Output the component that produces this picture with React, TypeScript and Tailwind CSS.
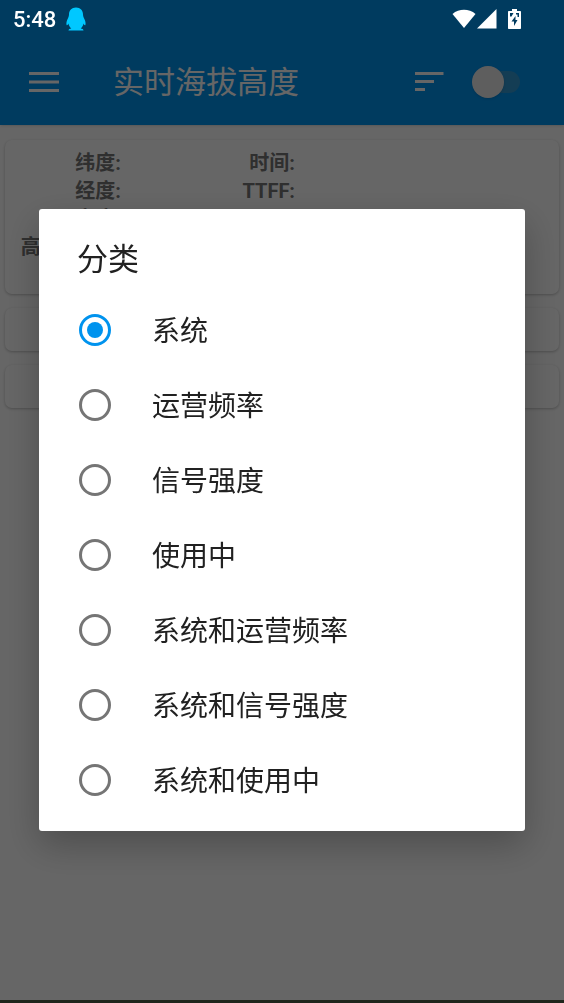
import { useState } from "react";

const options = [
    "系统",
    "运营频率",
    "信号强度",
    "使用中",
    "系统和运营频率",
    "系统和信号强度",
    "系统和使用中",
];

function StatusBar() {
    return (
        <div className="fixed inset-x-0 top-0 z-20 flex h-[38px] items-center justify-between pl-[13px] pr-[43px] text-white">
            <div className="flex items-center gap-[10px]">
                <span className="pt-px text-[22px] font-medium leading-none">5:48</span>
                <svg width="20" height="24" viewBox="0 0 20 24" fill="#00c8ff" aria-hidden="true">
                    <path d="M10 0.500C5.600 0.500 3 3.600 3 7.500C3 9 2.500 10.400 1.400 12.500C0.500 14.500 0 17 0.800 18.300C1.500 18.500 2 17.400 2.400 16.600C2.800 18.600 3.900 20.300 5.300 21.500C3.700 21.600 2.500 22.200 2.500 23.500H17.500C17.500 22.200 16.300 21.600 14.700 21.500C16.100 20.300 17.200 18.600 17.600 16.600C18 17.400 18.500 18.500 19.200 18.300C20 17 19.500 14.500 18.600 12.500C17.500 10.400 17 9 17 7.500C17 3.600 14.400 0.500 10 0.500Z" />
                </svg>
            </div>
            <div className="flex items-center">
                <svg width="24" height="20" viewBox="0 0 24 20" fill="currentColor" aria-hidden="true">
                    <path d="M0.500 5C7 -0.600 17 -0.600 23.500 5L12 19Z" />
                </svg>
                <svg className="ml-px" width="20" height="20" viewBox="0 0 20 20" fill="currentColor" aria-hidden="true">
                    <path d="M19.500 0V19.500H0Z" />
                </svg>
                <svg className="ml-[11px]" width="13" height="20" viewBox="0 0 13 20" fill="currentColor" aria-hidden="true">
                    <path
                        fillRule="evenodd"
                        d="M4 0H9V2H12C12.600 2 13 2.400 13 3V19C13 19.600 12.600 20 12 20H1C0.400 20 0 19.600 0 19V3C0 2.400 0.400 2 1 2H4ZM2 4V7.500H3.500L5.500 4ZM7.500 7L3.500 12.500H6V17L9.500 11H7.500ZM8 4V5.500H9.500V8H11V4Z"
                    />
                </svg>
            </div>
        </div>
    );
}

function Toolbar() {
    return (
        <header className="flex h-[125px] items-center bg-[#0093ee] pl-[29px] pr-[44px] pt-[38px] text-white shadow">
            <button type="button" aria-label="菜单">
                <svg width="30" height="20" viewBox="0 0 30 20" fill="currentColor">
                    <path d="M0 0H30V3H0ZM0 8.500H30V11.500H0ZM0 17H30V20H0Z" />
                </svg>
            </button>
            <h1 className="ml-[54px] pt-px text-[31px] leading-none">实时海拔高度</h1>
            <button type="button" aria-label="排序" className="ml-auto">
                <svg width="29" height="19" viewBox="0 0 29 19" fill="currentColor">
                    <path d="M0 0H28.500V3H0ZM0 8H19V11H0ZM0 16H10V19H0Z" />
                </svg>
            </button>
            <label className="relative ml-[28px] flex h-8 w-12 items-center">
                <input type="checkbox" aria-label="定位" className="peer absolute inset-0 z-10 appearance-none" />
                <span className="ml-auto h-[22px] w-[36px] rounded-full bg-[#4a9ac4]/70" />
                <span className="absolute left-0 size-8 rounded-full bg-[#ececec] shadow-sm peer-checked:left-4" />
            </label>
        </header>
    );
}

function Card({ children }: { children?: React.ReactNode }) {
    return (
        <section className="min-h-[43px] rounded-[7px] bg-white shadow-[0_1px_3px_rgba(0,0,0,0.25)]">
            {children}
        </section>
    );
}

function SortDialog() {
    const [selected, setSelected] = useState("系统");

    return (
        <div className="fixed inset-0 z-10 flex items-center justify-center bg-black/60 px-[39px] pt-[37px]">
            <div
                role="dialog"
                aria-labelledby="sort-title"
                className="w-full rounded-[3px] bg-white pb-[14px] text-[#212121] shadow-[0_14px_36px_rgba(0,0,0,0.25)]"
            >
                <h2 id="sort-title" className="px-[38px] pb-[9px] pt-7 text-[31px] leading-[46px]">分类</h2>
                {options.map((option) => (
                    <label key={option} className="flex h-[75px] items-center gap-[41px] px-10 text-[28px]">
                        <input
                            type="radio"
                            name="sort"
                            checked={selected === option}
                            onChange={() => setSelected(option)}
                            className="size-8 shrink-0 appearance-none rounded-full border-3 border-[#757575] bg-clip-content p-[5px] checked:border-[#0093ee] checked:bg-[#0093ee]"
                        />
                        <span className="pt-1">{option}</span>
                    </label>
                ))}
            </div>
        </div>
    );
}

export default function App() {
    return (
        <div className="flex min-h-screen flex-col bg-white font-[Roboto,'Noto_Sans_CJK_SC',sans-serif]">
            <StatusBar />
            <Toolbar />
            <main className="flex flex-1 flex-col gap-[14px] px-[5px] py-[15px]">
                <Card>
                    <div className="flex pb-[5px] pt-[9px] text-right text-[20px] font-bold leading-7 text-[#757575]">
                        <div className="w-[116px]">
                            <p>纬度:</p>
                            <p>经度:</p>
                            <p>高度:</p>
                            <p>高度(MSL):</p>
                            <p>速度:</p>
                        </div>
                        <div className="w-[174px]">
                            <p>时间:</p>
                            <p>TTFF:</p>
                        </div>
                    </div>
                </Card>
                <Card />
                <Card />
            </main>
            <footer className="relative z-20 h-[3px] bg-[#1f261c]" />
            <SortDialog />
        </div>
    );
}
